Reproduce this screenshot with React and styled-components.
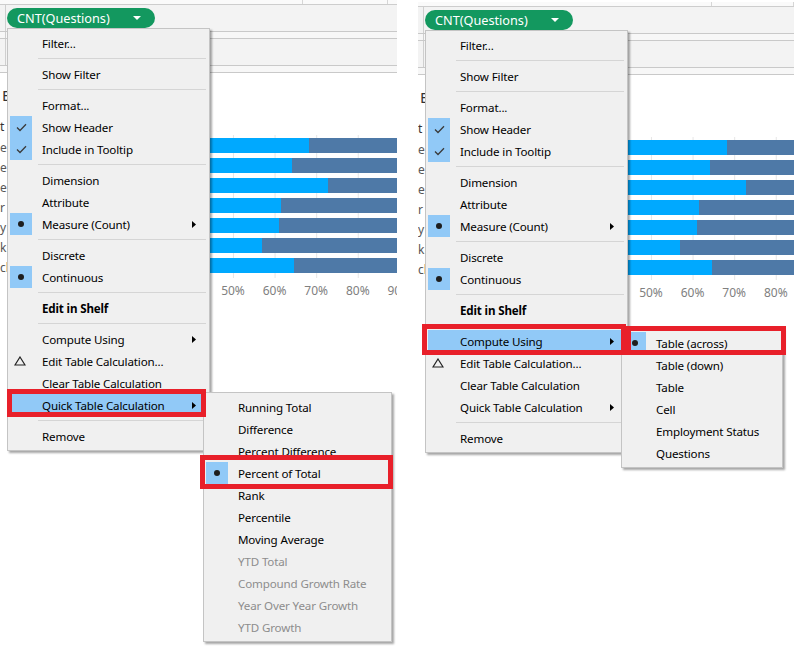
import React from 'react';
import styled, { createGlobalStyle } from 'styled-components';

const Global = createGlobalStyle`
  html, body { margin: 0; padding: 0; background: #ffffff; }
  body { font-family: "Segoe UI", "Noto Sans", sans-serif; }
`;

const Page = styled.div`
  display: flex;
  gap: 21px;
  width: 794px;
  height: 646px;
  overflow: hidden;
  background: #ffffff;
`;

const Panel = styled.div`
  position: relative;
  flex: 0 0 ${(p) => p.$w}px;
  width: ${(p) => p.$w}px;
  height: 646px;
  margin-top: ${(p) => p.$dy}px;
  overflow: hidden;
  display: flex;
  flex-direction: column;
`;

const TopStrip = styled.div`
  display: flex;
  height: 4px;
  border-bottom: 1px solid #cdcdcd;
  background: #fafafa;
`;

const TopCell = styled.div`
  width: ${(p) => p.$w}px;
  border-right: 1px solid #d6d6d6;
`;

const Band = styled.div`
  height: ${(p) => p.$h}px;
  background: ${(p) => p.$bg || '#f3f3f3'};
  border-bottom: 1px solid #c9c9c9;
  display: flex;
`;

const BandInner = styled.div`
  margin-left: 5px;
  border-left: 1px solid #cfcfcf;
  padding: ${(p) => p.$pad || '0'};
  flex: 1;
  display: flex;
  align-items: flex-start;
`;

const Pill = styled.div`
  margin-left: 1px;
  width: 148px;
  height: 20px;
  border-radius: 10px;
  background: #13985f;
  color: #ffffff;
  font-size: 12.7px;
  display: flex;
  align-items: center;
  padding-left: 10px;
  box-sizing: border-box;
  line-height: 20px;
`;

const PillCaret = styled.svg`
  margin-left: auto;
  margin-right: 14px;
`;

const Canvas = styled.div`
  flex: 1;
  background: #ffffff;
  display: flex;
  flex-direction: column;
`;

const Title = styled.div`
  margin: 12px 0 0 2px;
  height: 20px;
  line-height: 20px;
  font-size: 15px;
  color: #333333;
`;

const HeaderRow = styled.div`
  height: 30px;
  display: flex;
  align-items: flex-end;
`;

const RowLabel = styled.div`
  height: ${(p) => p.$h || 20}px;
  line-height: ${(p) => p.$h || 20}px;
  font-size: 12px;
  color: ${(p) => p.$c || '#555555'};
  white-space: nowrap;
`;

const Body = styled.div`
  display: flex;
`;

const LabelCol = styled.div`
  flex: 0 0 25px;
  width: 25px;
  padding-top: 3px;
  display: flex;
  flex-direction: column;
  overflow: hidden;
`;

const Plot = styled.div`
  flex: 0 0 416px;
  width: 416px;
  padding: 3px 0 5px;
  background-image: linear-gradient(to right, #e6e6e6 1px, transparent 1px);
  background-size: 41.6px 100%;
  display: flex;
  flex-direction: column;
  gap: 5px;
`;

const Bar = styled.div`
  height: 15px;
  display: flex;
`;

const BarPart = styled.div`
  height: 100%;
  background: ${(p) => p.$c};
  flex: ${(p) => (p.$grow ? 1 : 'none')};
`;

const Axis = styled.div`
  display: flex;
  margin-left: 212.2px;
  height: 24px;
  align-items: center;
`;

const Tick = styled.div`
  flex: 0 0 41.6px;
  text-align: center;
  font-size: 12px;
  color: #808080;
`;

const Menu = styled.div`
  position: absolute;
  left: ${(p) => p.$x}px;
  top: ${(p) => p.$y}px;
  width: ${(p) => p.$w}px;
  box-sizing: border-box;
  background: #f0f0f0;
  border: 1px solid #c4c4c4;
  box-shadow: 2px 2px 2px rgba(0, 0, 0, 0.35);
  padding: 3px 0;
  z-index: ${(p) => p.$z || 10};
  font-size: 11.6px;
  letter-spacing: -0.15px;
`;

const Row = styled.div`
  position: relative;
  height: 22px;
  display: flex;
  align-items: center;
  padding: 0 2px;
  background-clip: content-box;
  background-color: ${(p) => (p.$hl ? '#91c9f7' : 'transparent')};
  color: ${(p) => (p.$dis ? '#8d8d8d' : '#000000')};
  font-weight: ${(p) => (p.$bold ? 700 : 400)};
  white-space: nowrap;
`;

const IconCell = styled.div`
  flex: 0 0 22px;
  height: 22px;
  display: flex;
  align-items: center;
  justify-content: center;
  background: ${(p) => (p.$on ? '#91c9f7' : 'transparent')};
`;

const Dot = styled.div`
  width: 6px;
  height: 6px;
  border-radius: 50%;
  background: #1e1e1e;
`;

const Label = styled.span`
  margin-left: 10px;
`;

const Arrow = styled.svg`
  margin-left: auto;
  margin-right: 11px;
`;

const Sep = styled.div`
  height: 1px;
  background: #d5d5d5;
  margin: 4px 3px 4px 30px;
`;

const RedBox = styled.div`
  position: absolute;
  top: ${(p) => p.$o.t}px;
  left: ${(p) => p.$o.l}px;
  right: ${(p) => p.$o.r}px;
  bottom: ${(p) => p.$o.b}px;
  border: 5px solid #e8202a;
  z-index: 5;
  pointer-events: none;
`;

const MENU_ITEMS = [
  { label: 'Filter...' },
  { sep: true },
  { label: 'Show Filter' },
  { sep: true },
  { label: 'Format...' },
  { label: 'Show Header', icon: 'check' },
  { label: 'Include in Tooltip', icon: 'check' },
  { sep: true },
  { label: 'Dimension' },
  { label: 'Attribute' },
  { label: 'Measure (Count)', icon: 'dot', arrow: true },
  { sep: true },
  { label: 'Discrete' },
  { label: 'Continuous', icon: 'dot' },
  { sep: true },
  { label: 'Edit in Shelf', bold: true },
  { sep: true },
  { id: 'compute', label: 'Compute Using', arrow: true },
  { label: 'Edit Table Calculation...', icon: 'delta' },
  { label: 'Clear Table Calculation' },
  { id: 'quick', label: 'Quick Table Calculation', arrow: true },
  { sep: true },
  { label: 'Remove' },
];

const QUICK_ITEMS = [
  { label: 'Running Total' },
  { label: 'Difference' },
  { label: 'Percent Difference' },
  { label: 'Percent of Total', icon: 'dot', red: { t: -7, l: -4, r: -2, b: -5 } },
  { label: 'Rank' },
  { label: 'Percentile' },
  { label: 'Moving Average' },
  { label: 'YTD Total', dis: true },
  { label: 'Compound Growth Rate', dis: true },
  { label: 'Year Over Year Growth', dis: true },
  { label: 'YTD Growth', dis: true },
];

const COMPUTE_ITEMS = [
  { label: 'Table (across)', icon: 'dot', red: { t: -6, l: 4, r: -4, b: -1 } },
  { label: 'Table (down)' },
  { label: 'Table' },
  { label: 'Cell' },
  { label: 'Employment Status' },
  { label: 'Questions' },
];

const BARS = [68.3, 64.2, 72.8, 61.5, 61.1, 57.0, 64.7];
const ROW_LABELS = ['e', 'e', 'e', 'r', 'y', 'ki', 'ch'];
const TICKS = ['50%', '60%', '70%', '80%', '90%', '100%'];

function Icon({ kind }) {
  if (kind === 'check') {
    return (
      <svg width="11" height="9" viewBox="0 0 11 9">
        <path d="M1 4.5 L4 7.5 L10 1.2" fill="none" stroke="#3a3a3a" strokeWidth="1.3" />
      </svg>
    );
  }
  if (kind === 'dot') return <Dot />;
  if (kind === 'delta') {
    return (
      <svg width="12" height="10" viewBox="0 0 12 10" style={{ marginLeft: -2 }}>
        <path d="M6 1 L11 9 L1 9 Z" fill="none" stroke="#222" strokeWidth="1.2" />
      </svg>
    );
  }
  return null;
}

function MenuRow({ item, open, children }) {
  return (
    <Row $hl={open} $dis={item.dis} $bold={item.bold}>
      <IconCell $on={item.icon === 'check' || item.icon === 'dot'}>
        <Icon kind={item.icon} />
      </IconCell>
      <Label>{item.label}</Label>
      {item.arrow && (
        <Arrow width="4" height="7" viewBox="0 0 4 7">
          <path d="M0 0 L4 3.5 L0 7 Z" fill="#000" />
        </Arrow>
      )}
      {item.red && <RedBox $o={item.red} />}
      {children}
    </Row>
  );
}

function SubMenu({ items, width }) {
  return (
    <Menu $x={195} $y={-2} $w={width} $z={2}>
      {items.map((it, i) => (
        <MenuRow key={i} item={it} />
      ))}
    </Menu>
  );
}

function ShelfPanel({ width, dy, openId, openRed, subItems, subWidth }) {
  return (
    <Panel $w={width} $dy={dy}>
      <TopStrip>
        <TopCell $w={302} />
        <TopCell $w={84} />
      </TopStrip>
      <Band $h={26}>
        <BandInner $pad="3px 0 0 0">
          <Pill>
            CNT(Questions)
            <PillCaret width="8" height="4" viewBox="0 0 8 4">
              <path d="M0 0 L8 0 L4 4 Z" fill="#fff" />
            </PillCaret>
          </Pill>
        </BandInner>
      </Band>
      <Band $h={6} $bg="#f7f7f7">
        <BandInner />
      </Band>
      <Band $h={26}>
        <BandInner />
      </Band>
      <Band $h={6} $bg="#f7f7f7" />
      <Canvas>
        <Title>E</Title>
        <HeaderRow>
          <RowLabel $h={16} $c="#333">t</RowLabel>
        </HeaderRow>
        <Body>
          <LabelCol>
            {ROW_LABELS.map((l, i) => (
              <RowLabel key={i}>{l}</RowLabel>
            ))}
          </LabelCol>
          <Plot>
            {BARS.map((v, i) => (
              <Bar key={i}>
                <BarPart $c="#00a9ff" style={{ width: `${v}%` }} />
                <BarPart $c="#4e79a7" $grow />
              </Bar>
            ))}
          </Plot>
        </Body>
        <Axis>
          {TICKS.map((t) => (
            <Tick key={t}>{t}</Tick>
          ))}
        </Axis>
      </Canvas>

      <Menu $x={7} $y={28} $w={203}>
        {MENU_ITEMS.map((it, i) =>
          it.sep ? (
            <Sep key={i} />
          ) : (
            <MenuRow key={i} item={it.id === openId ? { ...it, red: openRed } : it} open={it.id === openId}>
              {it.id === openId && <SubMenu items={subItems} width={subWidth} />}
            </MenuRow>
          )
        )}
      </Menu>
    </Panel>
  );
}

export default function App() {
  return (
    <>
      <Global />
      <Page>
        <ShelfPanel
          width={397}
          dy={0}
          openId="quick"
          openRed={{ t: -5, l: -1, r: 3, b: -1 }}
          subItems={QUICK_ITEMS}
          subWidth={189}
        />
        <ShelfPanel
          width={376}
          dy={2}
          openId="compute"
          openRed={{ t: -6, l: -4, r: 1, b: -3 }}
          subItems={COMPUTE_ITEMS}
          subWidth={162}
        />
      </Page>
    </>
  );
}
